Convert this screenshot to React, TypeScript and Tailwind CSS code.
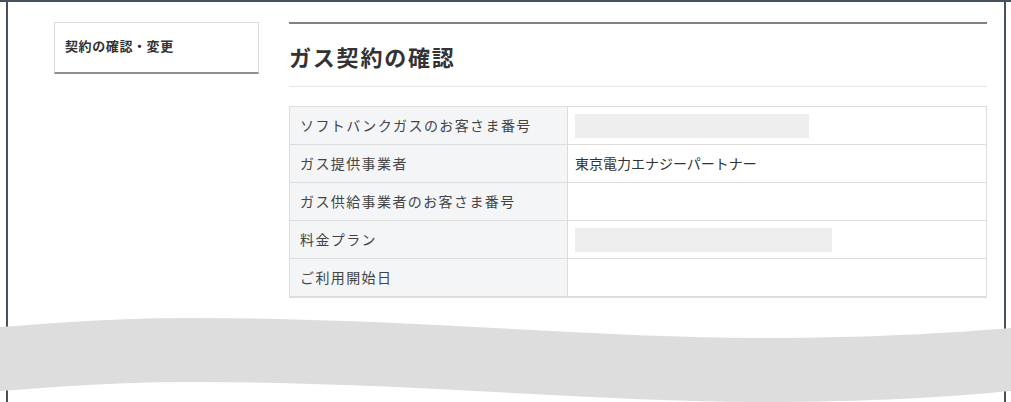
const rows = [
  { label: 'ソフトバンクガスのお客さま番号', value: null, bar: 'w-[234px]' },
  { label: 'ガス提供事業者', value: '東京電力エナジーパートナー', bar: null },
  { label: 'ガス供給事業者のお客さま番号', value: null, bar: null },
  { label: '料金プラン', value: null, bar: 'w-[257px]' },
  { label: 'ご利用開始日', value: null, bar: null },
];

function Wave() {
  return (
    <svg
      className="absolute left-0 top-0"
      width="1011"
      height="402"
      viewBox="0 0 1011 402"
    >
      <path
        d="M0 327 C80 321 130 318 193 318 C400 318 600 338 761 338 C870 338 950 333 1011 328 L1011 391 C950 397 870 402 761 402 C600 402 400 382 193 382 C130 382 80 385 0 391 Z"
        fill="#dddddd"
      />
    </svg>
  );
}

export default function App() {
  return (
    <div
      className="relative h-[402px] w-[1011px] overflow-hidden bg-white text-[#333]"
      style={{ fontFamily: '"Noto Sans CJK JP", "Noto Sans", sans-serif' }}
    >
      <div className="flex h-full flex-col border-t-2 border-[#47515b]">
        <div className="ml-[6px] flex h-full w-[1000px] border-x-2 border-[#47515b] pl-[46px] pr-[17px] pt-[20px]">
          {/* Side menu */}
          <div className="h-[52px] w-[205px] shrink-0 border border-b-2 border-[#dcdcdc] border-b-[#8a9197] pl-[10px] pt-[13px]">
            <p className="text-[13px] font-bold leading-[20px] tracking-[0.6px]">契約の確認・変更</p>
          </div>

          {/* Main */}
          <div className="ml-[30px] flex-1">
            <div className="border-t-2 border-[#7c8387]">
              <h1 className="border-b border-[#e6e6e6] pb-[14px] pt-[16px] text-[22px] font-bold leading-[32px] tracking-[1.8px]">
                ガス契約の確認
              </h1>
            </div>

            <div className="mt-[19px] border border-[#dddddd]">
              {rows.map((row) => (
                <div key={row.label} className="flex h-[38px] border-b border-[#dddddd]">
                  <div className="flex w-[278px] shrink-0 items-center border-r border-[#dddddd] bg-[#f4f5f7] pl-[10px] text-[14px] tracking-[1.4px] text-[#444]">
                    {row.label}
                  </div>
                  <div className="flex flex-1 items-center pl-[7px] text-[14px] text-[#333]">
                    {row.bar && <div className={`h-[24px] ${row.bar} bg-[#eeeeee]`} />}
                    {row.value && <span>{row.value}</span>}
                  </div>
                </div>
              ))}
            </div>
          </div>
        </div>
      </div>
      <Wave />
    </div>
  );
}
